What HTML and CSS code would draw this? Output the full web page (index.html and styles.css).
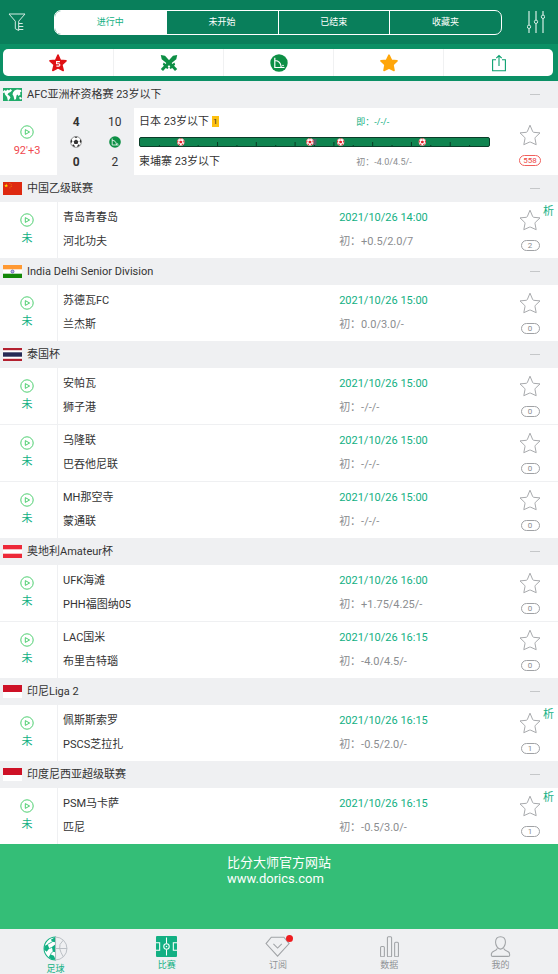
FILE: index.html
```html
<!DOCTYPE html>
<html lang="zh-CN">
<head>
<meta charset="utf-8">
<meta name="viewport" content="width=device-width, initial-scale=1">
<title>比分大师</title>
<link rel="stylesheet" href="styles.css">
</head>
<body>
<svg class="defs" aria-hidden="true">
  <symbol id="play" viewBox="0 0 14 14"><circle cx="7" cy="7" r="6.2"/><path d="M5.3 4.6v4.8L9.6 7z"/></symbol>
  <symbol id="star" viewBox="0 0 22 22"><path d="M11 1.2 L13.7 7.6 Q14 8.2 14.7 8.3 L21 8.9 L16.3 13.4 Q15.800 13.900 16 14.600 L17.200 20.700 L11.700 18.200 Q11 17.900 10.300 18.200 L4.800 20.700 L6 14.600 Q6.200 13.900 5.700 13.400 L1 8.900 L7.300 8.300 Q8 8.200 8.300 7.600 Z"/></symbol>
  <symbol id="corner" viewBox="0 0 18 18"><circle cx="9" cy="9" r="8.7" fill="#0d8f45"/><path d="M4.800 3.800v9.700h9.700M4.800 6.500Q10.800 6.700 11.300 13.500" fill="none" stroke="#fff" stroke-width="1.200"/><circle cx="13" cy="11.500" r=".8" fill="#fff"/></symbol>
  <symbol id="ball" viewBox="0 0 10 10"><circle cx="5" cy="5" r="4.6" fill="#fff"/><path d="M5 3 7 4.4 6.3 6.7H3.7L3 4.4zM3.6.7h2.8L5 1.9zM.5 4.4 1.3 2.6 2 4.6.9 6.1zM9.5 4.4 8.7 2.6 8 4.6l1.1 1.5zM2 8.2l.5-1.5 1.6 1.6-.4.9zM8 8.2l-.5-1.5-1.6 1.6.4.9z" fill="currentColor"/><circle cx="5" cy="5" r="4.5" fill="none" stroke="currentColor" stroke-width=".4"/></symbol>
  <symbol id="indonesia" viewBox="0 0 19 13"><path fill="#fff" d="M0 0h19v13H0z"/><path fill="#ce1126" d="M0 0h19v7H0z"/></symbol>
</svg>

<header class="top">
  <div class="top-bar">
    <button class="top-icon" aria-label="筛选"><svg class="filter" viewBox="0 0 18 20"><path d="M1 2h16l-6.300 7.200v9.300l-3.400-1.800V9.200L1 2M10.700 11.500h4M10.700 14.500h4.600M10.700 17.500h4.600"/></svg></button>
    <div class="tabs" role="tablist">
      <button class="tab active" role="tab" aria-selected="true">进行中</button>
      <button class="tab" role="tab">未开始</button>
      <button class="tab" role="tab">已结束</button>
      <button class="tab" role="tab">收藏夹</button>
    </div>
    <button class="top-icon settings" aria-label="设置"><svg class="sliders" viewBox="0 0 18 24"><path d="M2 1v14M2 18.500V23M9 1v9M9 13.500V23M16 1v4M16 8.500V23"/><g><circle cx="2" cy="16.800" r="1.700"/><circle cx="9" cy="11.800" r="1.700"/><circle cx="16" cy="6.800" r="1.700"/></g></svg></button>
  </div>
  <div class="tools">
    <button class="tool" aria-label="五大联赛"><svg viewBox="0 0 18 18"><path d="M9 1 11.300 6.300 17 6.800 12.800 10.600 14.200 16.500 9 13.800 3.800 16.500 5.200 10.600 1 6.800 6.700 6.300Z" fill="#df1014" stroke="#df1014" stroke-width="1.600" stroke-linejoin="round"/><path d="M10.900 7.600H7.600v2.100h2q1.300.1 1.300 1.200t-1.300 1.200H7.400" fill="none" stroke="#fff" stroke-width="1.100"/></svg></button>
    <button class="tool" aria-label="对阵"><svg viewBox="0 0 18 18"><g id="sword"><path d="M.8 1 5 1.700 12.500 10 14.300 8.500 15.200 10.400 14.100 11.800 17.200 15 15 17 12.200 13.900 10.500 15 9.400 13.700 10.300 12.200 1.700 5.200Z" fill="#0d8f45"/></g><use href="#sword" transform="matrix(-1 0 0 1 18 0)"/></svg></button>
    <button class="tool" aria-label="角球"><svg viewBox="0 0 18 18"><use href="#corner"/></svg></button>
    <button class="tool" aria-label="收藏"><svg viewBox="0 0 18 18"><path d="M9 1.200 11.400 6.200 17 6.900 13 10.800 14 16.500 9 14 4 16.500 5 10.800 1 6.900 6.600 6.200Z" fill="#ffa60a" stroke="#ffa60a" stroke-width="1.600" stroke-linejoin="round"/></svg></button>
    <button class="tool" aria-label="分享"><svg viewBox="0 0 18 18"><path d="M6 5.800H2.600v11h12.800v-11H12M9 12V1.500M6.300 4.200 9 1.500l2.700 2.700" fill="none" stroke="#0aa06f" stroke-width="1.100"/></svg></button>
  </div>
</header>

<main class="list">
  <section>
    <h2 class="league"><svg class="flag" viewBox="0 0 19 13"><path fill="#20ab6a" d="M0 0h19v13H0z"/><path fill="#fff" d="M0 3.500 1.500 2 3 3 4.500 1.500 6 2.500 7.500 1 9 2.500 7.500 4 5.500 5 4.500 6.500 6.500 8 7.500 9.500 6 12 5 13 4 9 2 6.500 1.500 4.500 0 5ZM10 4.500 11.500 2.500 14 1.500 18 2 18.500 3.500 17 4.500 17.500 6.500 15.500 8 14.500 6.500 13.500 7.500 13 11 11.500 12 10.500 8 9.500 6.500ZM16 9.500l2-.5 1 2-2 .5z"/></svg><span>AFC亚洲杯资格赛 23岁以下</span><button class="fold" aria-label="收起"></button></h2>
    <article class="match live">
      <div class="status"><svg class="play"><use href="#play"/></svg><span class="clock">92'+3</span></div>
      <div class="scores"><b>4</b><span>10</span><svg class="mini dark"><use href="#ball"/></svg><svg class="mini"><use href="#corner"/></svg><b>0</b><span>2</span></div>
      <div class="live-body">
        <div class="team">日本 23岁以下 <span class="card">1</span></div>
        <div class="odds now">即：-/-/-</div>
        <svg class="timeline" role="img" aria-label="进球时间线">
          <g class="ticks">
            <line x1="5.560%" x2="5.560%" y1="7" y2="9"/><line x1="11.110%" x2="11.110%" y1="5" y2="9"/><line x1="16.670%" x2="16.670%" y1="7" y2="9"/><line x1="22.220%" x2="22.220%" y1="4" y2="9"/><line x1="27.780%" x2="27.780%" y1="7" y2="9"/><line x1="33.330%" x2="33.330%" y1="4" y2="9"/><line x1="38.890%" x2="38.890%" y1="7" y2="9"/><line x1="44.440%" x2="44.440%" y1="4" y2="9"/><line x1="50%" x2="50%" y1="2" y2="9"/><line x1="55.560%" x2="55.560%" y1="4" y2="9"/><line x1="61.110%" x2="61.110%" y1="7" y2="9"/><line x1="66.670%" x2="66.670%" y1="4" y2="9"/><line x1="72.220%" x2="72.220%" y1="7" y2="9"/><line x1="77.780%" x2="77.780%" y1="4" y2="9"/><line x1="83.330%" x2="83.330%" y1="7" y2="9"/><line x1="88.890%" x2="88.890%" y1="4" y2="9"/><line x1="94.440%" x2="94.440%" y1="7" y2="9"/>
          </g>
          <svg class="half" x="50%" overflow="visible"><rect x="-3" y="1" width="5" height="6" fill="#56606a"/></svg>
          <svg x="11.700%" overflow="visible"><use href="#ball" x="-4" y="0" width="8" height="8"/></svg>
          <svg x="48.700%" overflow="visible"><use href="#ball" x="-4" y="0" width="8" height="8"/></svg>
          <svg x="57.500%" overflow="visible"><use href="#ball" x="-4" y="0" width="8" height="8"/></svg>
          <svg x="80.900%" overflow="visible"><use href="#ball" x="-4" y="0" width="8" height="8"/></svg>
        </svg>
        <div class="team">柬埔寨 23岁以下</div>
        <div class="odds">初：-4.0/4.5/-</div>
      </div>
      <div class="side"><button class="fav" aria-label="收藏"><svg><use href="#star"/></svg></button><span class="count hot">558</span></div>
    </article>
  </section>

  <section>
    <h2 class="league"><svg class="flag" viewBox="0 0 19 13"><path fill="#de2910" d="M0 0h19v13H0z"/><path fill="#ffde00" d="m3.200 1.500.5 1.400h1.500L4 3.800l.5 1.500-1.300-.9-1.300.9.500-1.500-1.200-.9h1.500z"/><path fill="#f5a000" d="M6.500 1h.8v.8h-.8zM7.800 2.400h.8v.8h-.8zM7.800 4.200h.8V5h-.8zM6.500 5.500h.8v.8h-.8z"/></svg><span>中国乙级联赛</span><button class="fold" aria-label="收起"></button></h2>
    <article class="match">
      <div class="status"><svg class="play"><use href="#play"/></svg><span>未</span></div>
      <div class="teams"><div>青岛青春岛</div><div>河北功夫</div></div>
      <div class="info"><time>2021/10/26 14:00</time><div>初：+0.5/2.0/7</div></div>
      <div class="side"><button class="fav" aria-label="收藏"><svg><use href="#star"/></svg></button><span class="count">2</span></div>
      <a class="analysis" href="#">析</a>
    </article>
  </section>

  <section>
    <h2 class="league"><svg class="flag" viewBox="0 0 19 13"><path fill="#fff" d="M0 0h19v13H0z"/><path fill="#ff9933" d="M0 0h19v4.300H0z"/><path fill="#138808" d="M0 8.700h19V13H0z"/><circle cx="9.500" cy="6.500" r="1.500" fill="#b9b9e6" stroke="#33339a" stroke-width=".6"/></svg><span>India Delhi Senior Division</span><button class="fold" aria-label="收起"></button></h2>
    <article class="match">
      <div class="status"><svg class="play"><use href="#play"/></svg><span>未</span></div>
      <div class="teams"><div>苏德瓦FC</div><div>兰杰斯</div></div>
      <div class="info"><time>2021/10/26 15:00</time><div>初：0.0/3.0/-</div></div>
      <div class="side"><button class="fav" aria-label="收藏"><svg><use href="#star"/></svg></button><span class="count">0</span></div>
    </article>
  </section>

  <section>
    <h2 class="league"><svg class="flag" viewBox="0 0 19 13"><path fill="#b3202f" d="M0 0h19v13H0z"/><path fill="#fff" d="M0 2.200h19v8.600H0z"/><path fill="#272a55" d="M0 4.300h19v4.400H0z"/></svg><span>泰国杯</span><button class="fold" aria-label="收起"></button></h2>
    <article class="match">
      <div class="status"><svg class="play"><use href="#play"/></svg><span>未</span></div>
      <div class="teams"><div>安帕瓦</div><div>狮子港</div></div>
      <div class="info"><time>2021/10/26 15:00</time><div>初：-/-/-</div></div>
      <div class="side"><button class="fav" aria-label="收藏"><svg><use href="#star"/></svg></button><span class="count">0</span></div>
    </article>
    <article class="match">
      <div class="status"><svg class="play"><use href="#play"/></svg><span>未</span></div>
      <div class="teams"><div>乌隆联</div><div>巴吞他尼联</div></div>
      <div class="info"><time>2021/10/26 15:00</time><div>初：-/-/-</div></div>
      <div class="side"><button class="fav" aria-label="收藏"><svg><use href="#star"/></svg></button><span class="count">0</span></div>
    </article>
    <article class="match">
      <div class="status"><svg class="play"><use href="#play"/></svg><span>未</span></div>
      <div class="teams"><div>MH那空寺</div><div>蒙通联</div></div>
      <div class="info"><time>2021/10/26 15:00</time><div>初：-/-/-</div></div>
      <div class="side"><button class="fav" aria-label="收藏"><svg><use href="#star"/></svg></button><span class="count">0</span></div>
    </article>
  </section>

  <section>
    <h2 class="league"><svg class="flag" viewBox="0 0 19 13"><path fill="#ed2939" d="M0 0h19v13H0z"/><path fill="#fff" d="M0 4.300h19v4.400H0z"/></svg><span>奥地利Amateur杯</span><button class="fold" aria-label="收起"></button></h2>
    <article class="match">
      <div class="status"><svg class="play"><use href="#play"/></svg><span>未</span></div>
      <div class="teams"><div>UFK海滩</div><div>PHH福图纳05</div></div>
      <div class="info"><time>2021/10/26 16:00</time><div>初：+1.75/4.25/-</div></div>
      <div class="side"><button class="fav" aria-label="收藏"><svg><use href="#star"/></svg></button><span class="count">0</span></div>
    </article>
    <article class="match">
      <div class="status"><svg class="play"><use href="#play"/></svg><span>未</span></div>
      <div class="teams"><div>LAC国米</div><div>布里吉特瑙</div></div>
      <div class="info"><time>2021/10/26 16:15</time><div>初：-4.0/4.5/-</div></div>
      <div class="side"><button class="fav" aria-label="收藏"><svg><use href="#star"/></svg></button><span class="count">0</span></div>
    </article>
  </section>

  <section>
    <h2 class="league"><svg class="flag"><use href="#indonesia"/></svg><span>印尼Liga 2</span><button class="fold" aria-label="收起"></button></h2>
    <article class="match">
      <div class="status"><svg class="play"><use href="#play"/></svg><span>未</span></div>
      <div class="teams"><div>佩斯斯索罗</div><div>PSCS芝拉扎</div></div>
      <div class="info"><time>2021/10/26 16:15</time><div>初：-0.5/2.0/-</div></div>
      <div class="side"><button class="fav" aria-label="收藏"><svg><use href="#star"/></svg></button><span class="count">1</span></div>
      <a class="analysis" href="#">析</a>
    </article>
  </section>

  <section>
    <h2 class="league"><svg class="flag"><use href="#indonesia"/></svg><span>印度尼西亚超级联赛</span><button class="fold" aria-label="收起"></button></h2>
    <article class="match">
      <div class="status"><svg class="play"><use href="#play"/></svg><span>未</span></div>
      <div class="teams"><div>PSM马卡萨</div><div>匹尼</div></div>
      <div class="info"><time>2021/10/26 16:15</time><div>初：-0.5/3.0/-</div></div>
      <div class="side"><button class="fav" aria-label="收藏"><svg><use href="#star"/></svg></button><span class="count">1</span></div>
      <a class="analysis" href="#">析</a>
    </article>
  </section>
</main>

<aside class="banner"><div>比分大师官方网站<br>www.dorics.com</div></aside>

<nav class="nav">
  <a class="nav-item on main" href="#"><svg viewBox="0 0 24 24"><path d="M12 1a11 11 0 0 0 0 22Z" fill="#fff" stroke="#12b083"/><path d="M12 1 7.500 3.500 9 5.500l3 .5zM12 8 8.500 10.500 9.500 15l2.500.5zM1.500 9.500 4.500 8 6 12l-2.500 3L1 13zM5.500 20.500 7 17.500l3.500 1.500 1.500 3.500-3 .2z" fill="#12b083"/><path d="m9 5.500-4.500 2.500M6 12l2.500-1M9.500 15 7 17.500" fill="none" stroke="#12b083" stroke-width=".8"/><path d="M12 1a11 11 0 0 1 0 22zM12 12h11M19.500 4Q15 8 16 12t3.500 8" fill="none" stroke="#b7bdc2" stroke-width=".9"/></svg><span>足球</span></a>
  <a class="nav-item on" href="#"><svg viewBox="0 0 20 20"><rect width="20" height="20" rx="1" fill="#12b083"/><path d="M10 1.500v5.700M10 12.800v5.700M0 6.500h3.500v7H0M20 6.500h-3.500v7H20" fill="none" stroke="#fff"/><circle cx="10" cy="10" r="2.600" fill="none" stroke="#fff"/><circle cx="10" cy="10" r=".7" fill="#fff"/></svg><span>比赛</span></a>
  <a class="nav-item sub" href="#"><svg viewBox="0 0 24 20"><path d="M6 1.200h12l5 6L12 19.200 1 7.200zM8 7.500l4 4 4-4"/></svg><span>订阅</span></a>
  <a class="nav-item" href="#"><svg viewBox="0 0 20 20"><rect x="1.500" y="10" width="3.600" height="9.800" rx="1"/><rect x="8" y="0.700" width="4" height="19.100" rx="1"/><rect x="14.900" y="6" width="3.600" height="13.800" rx="1"/></svg><span>数据</span></a>
  <a class="nav-item" href="#"><svg viewBox="0 0 20 20"><path d="M10 .7C7 .7 5.300 3 5.300 6S7.500 12.500 10 12.500 14.700 9 14.700 6 13 .7 10 .7zM7 11.700c-.5 1.600-1 1.900-3 2.500-2.500.8-2.800 1.600-2.800 3.800 0 1 .4 1.400 1.400 1.400h14.800c1 0 1.400-.4 1.400-1.400 0-2.200-.3-3-2.800-3.800-2-.6-2.500-.9-3-2.500"/></svg><span>我的</span></a>
</nav>
</body>
</html>
```
FILE: styles.css
```css
* { box-sizing: border-box; }

body {
  margin: 0;
  min-height: 100vh;
  display: flex;
  flex-direction: column;
  background: #fff;
  color: #333;
  font: 11px/16px Roboto, "Noto Sans CJK SC", sans-serif;
}

button {
  margin: 0;
  padding: 0;
  border: 0;
  background: none;
  color: inherit;
  font: inherit;
}

a { color: inherit; text-decoration: none; }
svg { display: block; flex: none; }
.defs { position: absolute; width: 0; height: 0; }

/* Header */
.top { background: #0b9065; }

.top-bar {
  display: grid;
  grid-template-columns: 54px 1fr 56px;
  align-items: center;
  height: 44px;
  background: #097f5b;
}

.top-icon { padding-left: 8px; }
.top-icon.settings { padding-left: 25px; }
.top-icon svg { fill: none; stroke: #d5ece4; stroke-width: 1; }
.filter { width: 18px; height: 20px; }
.sliders { width: 18px; height: 24px; }
.top-icon .sliders path { opacity: .6; stroke-width: 2; }

.tabs {
  display: flex;
  height: 25px;
  border: 1px solid #fff;
  border-radius: 7px;
  overflow: hidden;
}

.tab { flex: 1 1 0; color: #fff; font-size: 9px; }
.tab + .tab { border-left: 1px solid #fff; }
.tab.active { background: #fff; color: #12b083; }

.tools {
  display: grid;
  grid-template-columns: repeat(5, 1fr);
  height: 27px;
  margin: 5px 5px 5px 3px;
  border-radius: 5px;
  background: #fff;
}

.tool { display: grid; place-items: center; }
.tool + .tool { border-left: 1px solid #f0f1f2; }
.tool svg { width: 18px; height: 18px; }

/* League headings */
.league {
  display: flex;
  align-items: center;
  gap: 5px;
  height: 27px;
  margin: 0;
  padding: 0 18px 0 3px;
  background: #eff0f2;
  font-size: 11px;
  font-weight: 400;
}

.flag { width: 19px; height: 13px; }
.fold { width: 10px; height: 10px; margin-left: auto; }
.fold::before { content: ""; display: block; height: 1px; background: #c5c7c9; }

/* Matches */
.match {
  position: relative;
  display: grid;
  grid-template-columns: 57px 5fr 3fr 56px;
  height: 56px;
}

.match + .match { height: 57px; border-top: 1px solid #eff0f2; }

.status {
  display: flex;
  flex-direction: column;
  align-items: center;
  justify-content: center;
  gap: 4px;
  padding-right: 3px;
  color: #12b083;
}

.play { width: 14px; height: 14px; fill: none; stroke: #4dcf70; stroke-width: 1; }

.teams, .info {
  display: flex;
  flex-direction: column;
  justify-content: center;
  gap: 8px;
}

.teams { padding-left: 5px; border-left: 1px solid #eff0f2; }
.info { padding-left: 4px; color: #8b8d90; }
.info time { color: #12b083; }

.side {
  display: flex;
  flex-direction: column;
  align-items: center;
  justify-content: center;
  gap: 9px;
}

.fav svg { width: 22px; height: 22px; fill: none; stroke: #a8aaad; stroke-width: 1; }

.count {
  min-width: 19px;
  height: 11px;
  padding: 0 3px;
  border: 1px solid #a0a2a5;
  border-radius: 6px;
  color: #8b8d90;
  font-size: 8px;
  line-height: 9px;
  text-align: center;
}

.count.hot { border-color: #f0605c; color: #ee4440; }

.analysis {
  position: absolute;
  top: 2px;
  right: 4px;
  color: #12b083;
}

/* Live match */
.match.live { grid-template-columns: 57px 77px 1fr 56px; height: 67px; }
.live .side { padding-top: 6px; }
.clock { color: #f04a4f; }

.scores {
  display: grid;
  grid-template-columns: 1fr 1fr;
  align-content: center;
  place-items: center;
  row-gap: 6px;
  background: #eff0f2;
  font-size: 12px;
}

.mini { width: 12px; height: 12px; }
.dark { color: #333; }

.live-body {
  display: grid;
  grid-template-columns: 13fr 8fr;
  align-content: center;
  row-gap: 7px;
  padding: 0 12px 0 5px;
}

.odds { color: #8b8d90; font-size: 9px; }
.odds.now { color: #12b083; }

.card {
  display: inline-block;
  width: 7px;
  background: #fdc010;
  font-size: 8px;
  line-height: 11px;
  text-align: center;
  vertical-align: top;
  margin-top: 2px;
}

.timeline {
  grid-column: 1 / -1;
  width: 100%;
  height: 10px;
  border: 1px solid #0b3d29;
  border-radius: 2px;
  background: #108450;
  color: #e0222b;
}

.ticks { stroke: #0a3a25; stroke-width: 1; }

/* Promotion and navigation */
.banner {
  display: flex;
  flex: 1;
  justify-content: center;
  padding: 11px 0;
  background: #34be77;
  color: #fff;
  font-size: 13px;
}

.nav {
  display: grid;
  grid-template-columns: repeat(5, 1fr);
  height: 45px;
  padding-right: 2px;
  background: #eff0f2;
  color: #909396;
  font-size: 9px;
  line-height: 12px;
}

.nav-item {
  position: relative;
  display: flex;
  flex-direction: column;
  align-items: center;
  gap: 2px;
  padding-top: 7px;
}

.nav-item svg { height: 21px; fill: none; stroke: #a0a3a6; stroke-width: 1; }
.nav-item.on { color: #12b083; }
.nav-item.on svg { stroke: none; }
.nav-item.main svg { height: 25px; }

.sub::after {
  content: "";
  position: absolute;
  top: 6px;
  left: calc(50% + 8px);
  width: 7px;
  height: 7px;
  border-radius: 50%;
  background: #ee1c20;
}
```
